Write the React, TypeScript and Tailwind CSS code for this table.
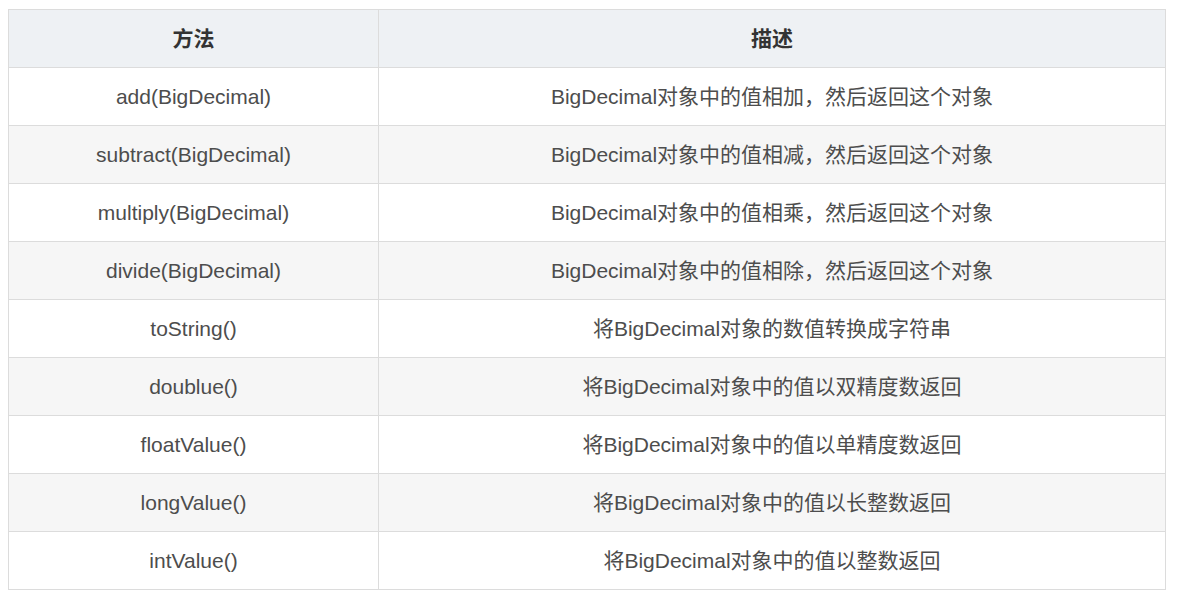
import React from "react";

const rows: [string, string][] = [
  ["add(BigDecimal)", "BigDecimal对象中的值相加，然后返回这个对象"],
  ["subtract(BigDecimal)", "BigDecimal对象中的值相减，然后返回这个对象"],
  ["multiply(BigDecimal)", "BigDecimal对象中的值相乘，然后返回这个对象"],
  ["divide(BigDecimal)", "BigDecimal对象中的值相除，然后返回这个对象"],
  ["toString()", "将BigDecimal对象的数值转换成字符串"],
  ["doublue()", "将BigDecimal对象中的值以双精度数返回"],
  ["floatValue()", "将BigDecimal对象中的值以单精度数返回"],
  ["longValue()", "将BigDecimal对象中的值以长整数返回"],
  ["intValue()", "将BigDecimal对象中的值以整数返回"],
];

export default function App() {
  return (
    <div
      className="bg-white w-[1189px] h-[593px] pt-[9px] pl-[8px]"
      style={{ fontFamily: '"Liberation Sans", Arial, "Noto Sans CJK SC", sans-serif' }}
    >
      <table className="border-collapse w-[1158px] table-fixed text-[21px] text-[#4d4d4d]">
        <colgroup>
          <col className="w-[370px]" />
          <col />
        </colgroup>
        <thead>
          <tr className="bg-[#eef1f4]">
            <th className="border border-[#dcdcdc] h-[58px] p-0 font-bold text-[#333333] text-center">方法</th>
            <th className="border border-[#dcdcdc] h-[58px] p-0 font-bold text-[#333333] text-center">描述</th>
          </tr>
        </thead>
        <tbody>
          {rows.map(([m, d], i) => (
            <tr key={m} className={i % 2 === 1 ? "bg-[#f6f6f6]" : "bg-white"}>
              <td className="border border-[#dcdcdc] h-[58px] p-0 text-center">{m}</td>
              <td className="border border-[#dcdcdc] h-[58px] p-0 text-center">{d}</td>
            </tr>
          ))}
        </tbody>
      </table>
    </div>
  );
}
